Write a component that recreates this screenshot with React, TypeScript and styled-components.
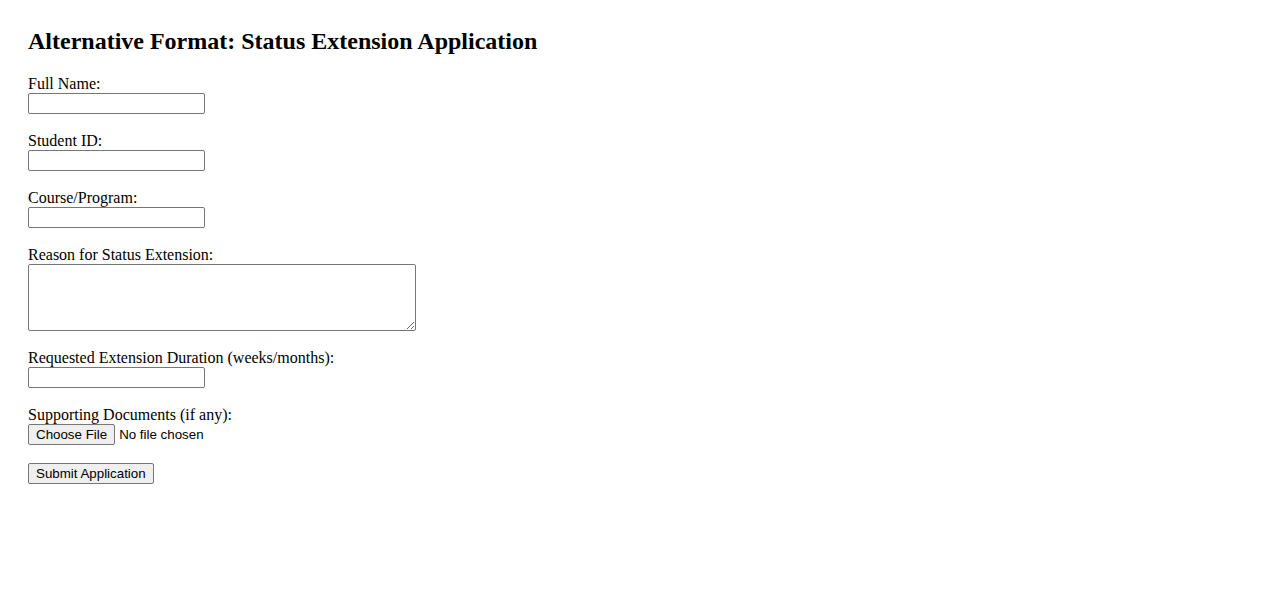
import React from "react";
import styled, { createGlobalStyle } from "styled-components";

const Global = createGlobalStyle`
  html, body { margin: 0; padding: 0; background: #ffffff; }
  body { font-family: "Liberation Serif", "Times New Roman", serif; font-size: 16px; color: #000; }
`;

const Page = styled.div`
  padding: 28px;
`;

const Title = styled.h2`
  font-family: "Liberation Serif", "Times New Roman", serif;
  font-size: 24px;
  font-weight: bold;
  margin: 0 0 19.92px 0;
`;

const Form = styled.form`
  display: flex;
  flex-direction: column;
  align-items: flex-start;
`;

const Field = styled.div`
  display: flex;
  flex-direction: column;
  align-items: flex-start;
  margin-bottom: 17.6px;
`;

const Label = styled.label`
  display: block;
  font-size: 16px;
  line-height: 18.4px;
`;

const TextInput = styled.input`
  display: block;
  box-sizing: border-box;
  width: 177px;
  height: 21px;
  margin: 0;
  padding: 1px 2px;
  border: 1px solid #767676;
  border-radius: 2px;
  background: #fff;
  font-family: "Liberation Sans", Arial, sans-serif;
  font-size: 13.33px;
`;

const TextArea = styled.textarea`
  display: block;
  box-sizing: border-box;
  width: 388px;
  height: 66.6px;
  margin: 0;
  padding: 2px;
  border: 1px solid #767676;
  border-radius: 2px;
  background: #fff;
  font-family: "Liberation Mono", monospace;
  font-size: 13.33px;
  resize: both;
`;

const FileRow = styled.div`
  display: flex;
  align-items: center;
  gap: 4px;
  font-family: "Liberation Sans", Arial, sans-serif;
  font-size: 13.33px;
`;

const HiddenFile = styled.input`
  display: none;
`;

const Button = styled.button`
  box-sizing: border-box;
  height: 21px;
  padding: 1px 7px;
  border: 1px solid #767676;
  border-radius: 2px;
  background: #efefef;
  color: #000;
  font-family: "Liberation Sans", Arial, sans-serif;
  font-size: 13.33px;
  line-height: 15px;
  cursor: default;
`;

const FileName = styled.span`
  color: #000;
`;

export default function App() {
  const fileRef = React.useRef<HTMLInputElement>(null);
  const [fileName, setFileName] = React.useState("No file chosen");
  return (
    <Page>
      <Global />
      <Title>Alternative Format: Status Extension Application</Title>
      <Form onSubmit={(e) => e.preventDefault()}>
        <Field>
          <Label htmlFor="fullName">Full Name:</Label>
          <TextInput id="fullName" type="text" />
        </Field>
        <Field>
          <Label htmlFor="studentId">Student ID:</Label>
          <TextInput id="studentId" type="text" />
        </Field>
        <Field>
          <Label htmlFor="course">Course/Program:</Label>
          <TextInput id="course" type="text" />
        </Field>
        <Field>
          <Label htmlFor="reason">Reason for Status Extension:</Label>
          <TextArea id="reason" />
        </Field>
        <Field>
          <Label htmlFor="duration">Requested Extension Duration (weeks/months):</Label>
          <TextInput id="duration" type="text" />
        </Field>
        <Field>
          <Label htmlFor="docs">Supporting Documents (if any):</Label>
          <FileRow>
            <Button type="button" onClick={() => fileRef.current?.click()}>Choose File</Button>
            <FileName>{fileName}</FileName>
            <HiddenFile
              id="docs"
              type="file"
              ref={fileRef}
              onChange={(e) => setFileName(e.target.files?.[0]?.name ?? "No file chosen")}
            />
          </FileRow>
        </Field>
        <Button type="submit">Submit Application</Button>
      </Form>
    </Page>
  );
}
